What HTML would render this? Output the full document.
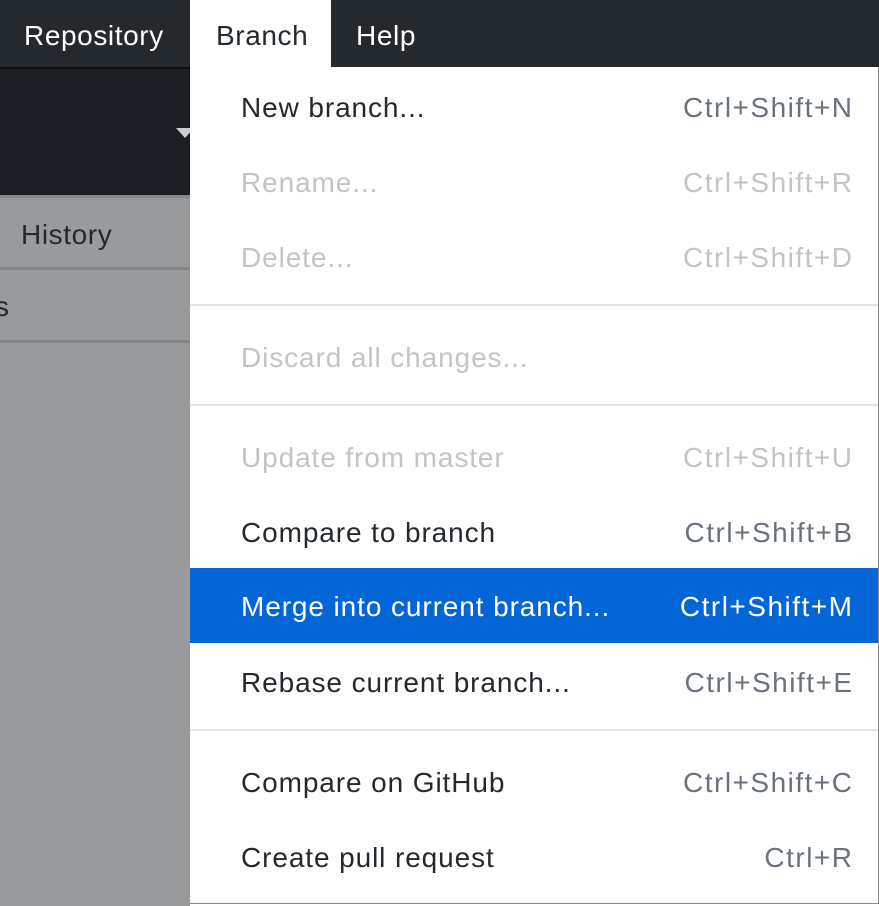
<!DOCTYPE html>
<html><head><style>
body{margin:0;width:879px;height:906px;overflow:hidden;position:relative;font-family:"Liberation Sans",sans-serif;background:#fff}
.top{position:absolute;left:0;top:0;width:879px;height:67px;background:#24292e}
.tab{position:absolute;top:0;height:67px;line-height:72px;font-size:28px;color:#fff;letter-spacing:0.6px}
.dark{position:absolute;left:0;top:67px;width:190px;height:128px;background:#1b1e22}
.gray{position:absolute;left:0;top:195px;width:190px;height:711px;background:#999a9c}
.line{position:absolute;left:0;width:190px;height:3px;background:#858789}
.menu{position:absolute;left:190px;top:67px;width:688px;height:836px;background:#fff;border-right:1px solid #888;border-bottom:1px solid #888}
.it{position:absolute;left:0;width:688px;height:75px;line-height:77px;font-size:28px;color:#24292e}
.it span{position:absolute;left:51px;letter-spacing:0.9px}
.it b{position:absolute;right:26px;font-weight:normal;color:#6a737d;letter-spacing:1.5px;margin-right:-1.5px}
.dis{color:#c3c4c6}.dis b{color:#c3c4c6}
.sel{background:#0366d6;color:#fff}.sel b{color:#fff}
.sep{position:absolute;left:0;width:688px;height:2px;background:#e1e4e8}
</style></head><body>
<div class="top"></div>
<div class="tab" style="left:24px">Repository</div>
<div style="position:absolute;left:190px;top:0;width:141px;height:67px;background:#fff"></div>
<div class="tab" style="left:216px;color:#24292e">Branch</div>
<div class="tab" style="left:356px">Help</div>
<div class="dark"></div>
<div style="position:absolute;left:0;top:67px;width:190px;height:2px;background:#0e0f11"></div>
<div style="position:absolute;left:176px;top:128px;width:0;height:0;border-left:9px solid transparent;border-right:9px solid transparent;border-top:10px solid #ccc"></div>
<div class="gray"></div>
<div class="line" style="top:195px"></div>
<div class="line" style="top:267px"></div>
<div class="line" style="top:340px"></div>
<div style="position:absolute;left:21px;top:219px;font-size:28px;color:#24292e;letter-spacing:0.6px">History</div>
<div style="position:absolute;left:-5px;top:291px;font-size:28px;color:#24292e">s</div>
<div class="menu">
<div class="it" style="top:2px"><span>New branch...</span><b>Ctrl+Shift+N</b></div>
<div class="it dis" style="top:77px"><span>Rename...</span><b>Ctrl+Shift+R</b></div>
<div class="it dis" style="top:152px"><span>Delete...</span><b>Ctrl+Shift+D</b></div>
<div class="sep" style="top:237px"></div>
<div class="it dis" style="top:252px"><span>Discard all changes...</span></div>
<div class="sep" style="top:337px"></div>
<div class="it dis" style="top:352px"><span>Update from master</span><b>Ctrl+Shift+U</b></div>
<div class="it" style="top:427px"><span>Compare to branch</span><b>Ctrl+Shift+B</b></div>
<div class="it sel" style="top:501px"><span>Merge into current branch...</span><b>Ctrl+Shift+M</b></div>
<div class="it" style="top:577px"><span>Rebase current branch...</span><b>Ctrl+Shift+E</b></div>
<div class="sep" style="top:662px"></div>
<div class="it" style="top:677px"><span>Compare on GitHub</span><b>Ctrl+Shift+C</b></div>
<div class="it" style="top:752px"><span>Create pull request</span><b>Ctrl+R</b></div>
</div>
</body></html>
